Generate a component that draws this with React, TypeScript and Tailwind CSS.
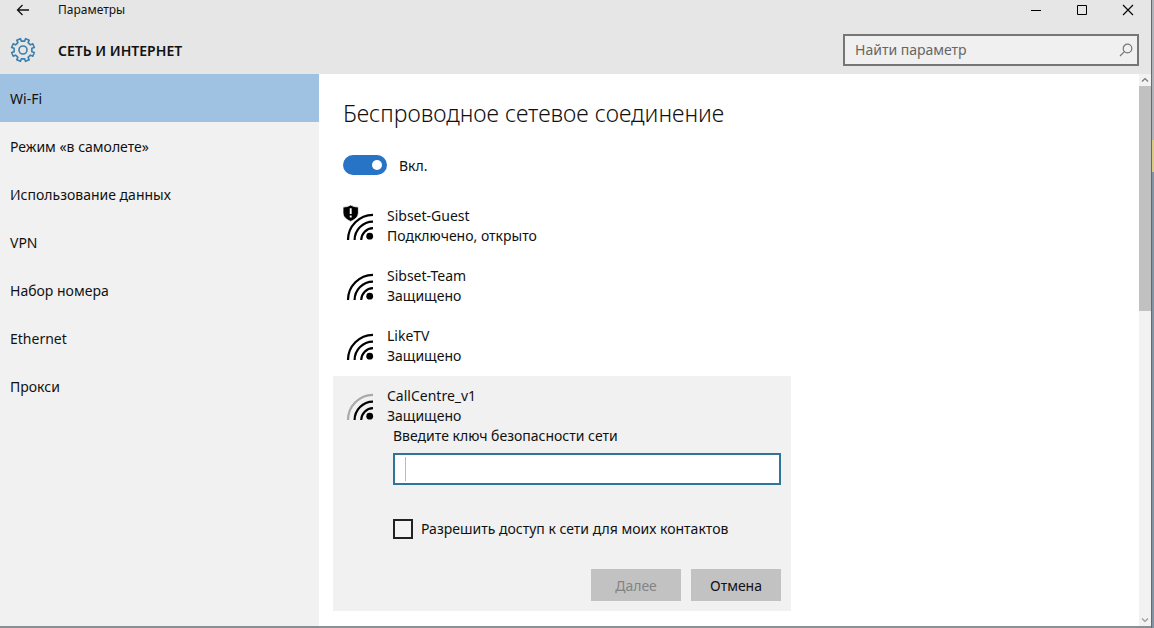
import { useState } from "react";

const sections = [
  "Wi-Fi",
  "Режим «в самолете»",
  "Использование данных",
  "VPN",
  "Набор номера",
  "Ethernet",
  "Прокси",
];

const networks = [
  { name: "Sibset-Guest", status: "Подключено, открыто", open: true },
  { name: "Sibset-Team", status: "Защищено" },
  { name: "LikeTV", status: "Защищено" },
];

// Eight teeth, with a gap between two of them at the top.
function gearPath(cx: number, cy: number) {
  const points: string[] = [];
  const tooth = [
    [-12, 9],
    [-10, 11.6],
    [10, 11.6],
    [12, 9],
  ];
  for (let i = 0; i < 8; i++) {
    for (const [offset, radius] of tooth) {
      const a = ((i * 45 + 22.5 + offset) * Math.PI) / 180;
      points.push(`${(cx + radius * Math.sin(a)).toFixed(2)} ${(cy - radius * Math.cos(a)).toFixed(2)}`);
    }
  }
  return `M${points.join("L")}Z`;
}

function GearIcon() {
  return (
    <svg viewBox="0 0 26 26" className="size-[26px]" fill="none" stroke="#3a80ad" strokeWidth="1.6" strokeLinejoin="round" aria-hidden="true">
      <path d={gearPath(13, 13)} />
      <circle cx="13" cy="13" r="4" />
    </svg>
  );
}

function WifiIcon({ weak = false, open = false }: { weak?: boolean; open?: boolean }) {
  return (
    <svg viewBox="0 0 32 36" className="h-9 w-8 shrink-0" fill="none" stroke="#000" strokeWidth="2.2" aria-hidden="true">
      <path d="M5 36A25.3 25.3 0 0 1 30 10.8" stroke={weak ? "#a9a9a9" : "#000"} />
      <path d="M11.600 36A18.500 18.500 0 0 1 30 17.600" />
      <path d="M18.200 36A12 12 0 0 1 30 24.200" />
      <circle cx="26.7" cy="32.2" r="3.4" fill="#000" stroke="none" />
      {open ? (
        <>
          <path d="M7.7 1C5.500 2.300 3 3 0 3v5.500C0 12.700 3 15.500 7.700 17.400 12.400 15.500 15.400 12.700 15.400 8.500V3C12.400 3 9.900 2.300 7.700 1Z" fill="#000" stroke="#fff" strokeWidth=".8" />
          <path d="M7.700 4.200v5.800M7.700 11.500v2" stroke="#fff" strokeWidth="1.900" />
        </>
      ) : null}
    </svg>
  );
}

function TitleBar() {
  return (
    <div className="flex h-5 items-center justify-between">
      <div className="flex items-center">
        <button type="button" aria-label="Назад" className="flex w-[46px] justify-center">
          <svg viewBox="0 0 14 12" className="h-3 w-3.5" fill="none" stroke="#111" strokeWidth="1.3" aria-hidden="true">
            <path d="M13 6H1.500M6.500 1 1.500 6l5 5" />
          </svg>
        </button>
        <span className="pl-3 text-xs">Параметры</span>
      </div>
      <div className="flex">
        <button type="button" aria-label="Свернуть" className="flex w-[46px] justify-center">
          <svg viewBox="0 0 12 12" className="size-3" stroke="#000" aria-hidden="true">
            <path d="M1 6.500h10" />
          </svg>
        </button>
        <button type="button" aria-label="Развернуть" className="flex w-[46px] justify-center">
          <svg viewBox="0 0 12 12" className="size-3" fill="none" stroke="#000" aria-hidden="true">
            <path d="M1.500 1.500h9v9h-9z" />
          </svg>
        </button>
        <button type="button" aria-label="Закрыть" className="flex w-[46px] justify-center">
          <svg viewBox="0 0 12 12" className="size-3" stroke="#000" strokeWidth="1.1" aria-hidden="true">
            <path d="m1 1 10 10M11 1 1 11" />
          </svg>
        </button>
      </div>
    </div>
  );
}

function ScrollBar() {
  return (
    <div className="flex w-3 shrink-0 flex-col items-center bg-[#f2f2f2]" aria-hidden="true">
      <svg viewBox="0 0 12 12" className="size-3 shrink-0" fill="none" stroke="#777" strokeWidth="1.2">
        <path d="m3 7.500 3-3 3 3" />
      </svg>
      <div className="h-[225px] w-full bg-[#c1c1c1]" />
      <svg viewBox="0 0 12 12" className="mt-auto size-3 shrink-0" fill="none" stroke="#999" strokeWidth="1.2">
        <path d="m3 4.500 3 3 3-3" />
      </svg>
    </div>
  );
}

function ConnectForm() {
  const [shared, setShared] = useState(false);

  return (
    <form className="ml-[50px] flex flex-col" onSubmit={(event) => event.preventDefault()}>
      <label htmlFor="network-key">Введите ключ безопасности сети</label>
      <div className="mt-[7px] flex h-8 items-center border-2 border-[#2f7597] bg-white pl-2.5">
        <span className="h-6 w-px bg-[#bbb]" aria-hidden="true" />
        <input id="network-key" type="password" className="h-full min-w-0 flex-1 bg-transparent px-1 outline-none" />
      </div>
      <label className="mt-[34px] flex items-center gap-2">
        <input
          type="checkbox"
          checked={shared}
          onChange={(event) => setShared(event.target.checked)}
          className="size-5 appearance-none border-2 border-[#222] bg-[#f4f4f4] checked:bg-[#2774c7]"
        />
        Разрешить доступ к сети для моих контактов
      </label>
      <div className="mt-[30px] flex justify-end gap-2.5">
        <button type="button" disabled className="h-8 w-[90px] bg-[#c2c2c2] pt-0.5 text-[#848484]">Далее</button>
        <button type="button" className="h-8 w-[90px] bg-[#c2c2c2] pt-0.5">Отмена</button>
      </div>
    </form>
  );
}

export default function App() {
  const [active, setActive] = useState("Wi-Fi");
  const [enabled, setEnabled] = useState(true);

  return (
    <div className="flex min-h-screen bg-[#8594a5] font-['Noto_Sans','Open_Sans',sans-serif] text-sm leading-5 text-[#111]">
      <div className="flex min-w-0 flex-1 flex-col border-b-2 border-[#8b8f94] bg-white">
        <header className="h-[74px] bg-[#e6e6e6]">
          <TitleBar />
          <div className="flex items-center justify-between pt-3.5 pr-3 pl-2.5">
            <div className="flex items-center gap-[22px]">
              <GearIcon />
              <h1 className="pt-0.5 text-sm font-semibold">СЕТЬ И ИНТЕРНЕТ</h1>
            </div>
            <div className="flex h-8 w-[296px] items-center border-2 border-[#767676] bg-[#f0f0f0] pr-1 pl-2.5">
              <input type="search" aria-label="Найти параметр" placeholder="Найти параметр" className="min-w-0 flex-1 bg-transparent outline-none placeholder:text-[#666]" />
              <svg viewBox="0 0 14 14" className="size-3.5" fill="none" stroke="#777" strokeWidth="1.2" aria-hidden="true">
                <circle cx="8.500" cy="5.500" r="4.300" />
                <path d="M5.400 8.600 1 13" />
              </svg>
            </div>
          </div>
        </header>

        <div className="flex flex-1">
          <nav className="w-[319px] shrink-0 bg-[#f1f1f1]">
            {sections.map((section) => (
              <button
                key={section}
                type="button"
                onClick={() => setActive(section)}
                className={`flex h-12 w-full items-center px-2.5 pt-0.5 text-left ${active === section ? "bg-[#a0c2e2]" : ""}`}
              >
                {section}
              </button>
            ))}
          </nav>

          <main className="min-w-0 flex-1 px-3.5 pt-[23px] pb-3.5">
            <h2 className="pl-2.5 text-[23px] leading-8 font-light">Беспроводное сетевое соединение</h2>
            <div className="mt-[26px] flex h-5 items-center gap-3 pl-2.5">
              <button
                type="button"
                role="switch"
                aria-checked={enabled}
                aria-labelledby="wifi-state"
                onClick={() => setEnabled(!enabled)}
                className={`flex h-5 w-11 items-center rounded-full px-[5px] ${enabled ? "justify-end bg-[#2774c7]" : "bg-[#888]"}`}
              >
                <span className="size-2.5 rounded-full bg-white" />
              </button>
              <span id="wifi-state" className="pt-0.5">{enabled ? "Вкл." : "Откл."}</span>
            </div>

            <ul className="mt-[21px] max-w-[458px]">
              {networks.map((network) => (
                <li key={network.name} className="flex h-[60px] gap-3 px-2.5 pt-2">
                  <WifiIcon open={network.open} />
                  <div className="pt-0.5">
                    <p>{network.name}</p>
                    <p>{network.status}</p>
                  </div>
                </li>
              ))}
              <li className="bg-[#f1f1f1] px-2.5 pt-2 pb-2.5">
                <div className="flex gap-3">
                  <WifiIcon weak />
                  <div className="pt-0.5">
                    <p>CallCentre_v1</p>
                    <p>Защищено</p>
                  </div>
                </div>
                <ConnectForm />
              </li>
            </ul>
          </main>

          <ScrollBar />
        </div>
      </div>
      <div className="flex w-[3px] shrink-0 flex-col border-l border-[#5d6b78]" aria-hidden="true">
        <div className="h-[140px] bg-[#b0b4ba]" />
        <div className="h-8 bg-[#d9cb85]" />
      </div>
    </div>
  );
}
